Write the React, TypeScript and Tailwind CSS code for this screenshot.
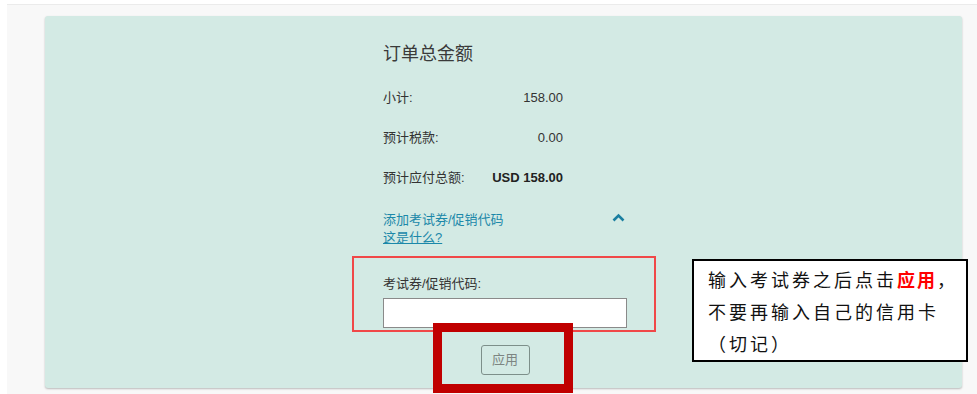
import React from 'react';

const rows = [
  { label: '小计:', value: '158.00', bold: false },
  { label: '预计税款:', value: '0.00', bold: false },
  { label: '预计应付总额:', value: 'USD 158.00', bold: true },
];

const ChevronUp: React.FC = () => (
  <svg width="13" height="9" viewBox="0 0 13 9" className="text-[#1a7fa0]">
    <path d="M1.5 7.5 L6.5 2.5 L11.5 7.5" fill="none" stroke="currentColor" strokeWidth="2.6" />
  </svg>
);

const App: React.FC = () => {
  return (
    <div className="h-[394px] w-[977px] overflow-hidden bg-white pt-[4px] pl-[7px] font-['Liberation_Sans','Noto_Sans_CJK_SC',sans-serif] text-[#333]">
      <div className="h-full border-t border-[#ebebeb] bg-[#f8f8f8] pt-[11px] pl-[38px]">
        <div className="relative h-[372px] w-[917px] rounded-[3px] bg-[#d3eae4] shadow-[0_1px_2px_rgba(0,0,0,0.25)]">
          <div className="flex w-[245px] flex-col pl-[338px] pt-[26px] box-content">
            <h2 className="text-[18px] leading-[24px] text-[#3a3a3a]">订单总金额</h2>

            <div className="mt-[12px] w-[180px]">
              {rows.map((r) => (
                <div key={r.label} className="flex h-[40px] items-center justify-between text-[13px]">
                  <span>{r.label}</span>
                  <span className={r.bold ? 'font-bold text-[#222]' : ''}>{r.value}</span>
                </div>
              ))}
            </div>

            <div className="mt-[13px] flex w-[245px] items-start justify-between text-[13px] leading-[18px] text-[#1b88a9]">
              <div className="flex flex-col">
                <span>添加考试券/促销代码</span>
                <span className="underline">这是什么?</span>
              </div>
              <div className="mr-[3px] mt-[2px]">
                <ChevronUp />
              </div>
            </div>

            <label className="mt-[28px] text-[13px] leading-[18px]">考试券/促销代码:</label>
            <input
              type="text"
              className="mt-[5px] h-[30px] w-[244px] border border-[#8a8a8a] bg-white outline-none"
            />
            <div className="mt-[17px] flex w-[244px] justify-center">
              <button className="h-[30px] w-[49px] rounded-[3px] border border-[#7d8f8a] text-[13px] text-[#7d8582]">
                应用
              </button>
            </div>
          </div>

          {/* annotation: thin red frame around the code field */}
          <div className="pointer-events-none absolute left-[307px] top-[240px] h-[76px] w-[304px] border-2 border-[#f04848]" />
          {/* annotation: thick frame around the apply button */}
          <div className="pointer-events-none absolute left-[388px] top-[307px] h-[70px] w-[140px] border-[9px] border-[#c00000]" />
          {/* annotation: note box */}
          <div className="absolute left-[647px] top-[243px] h-[103px] w-[276px] border-2 border-black bg-white pl-[14px] pt-[4px] font-['Liberation_Serif','Noto_Sans_CJK_SC',serif] text-[18px] leading-[32px] tracking-[3px] text-[#111]">
            <div>
              输入考试券之后点击<span className="font-bold tracking-[2px] text-[#ff0000]">应用</span>，
            </div>
            <div>不要再输入自己的信用卡</div>
            <div>（切记）</div>
          </div>
        </div>
      </div>
    </div>
  );
};

export default App;
